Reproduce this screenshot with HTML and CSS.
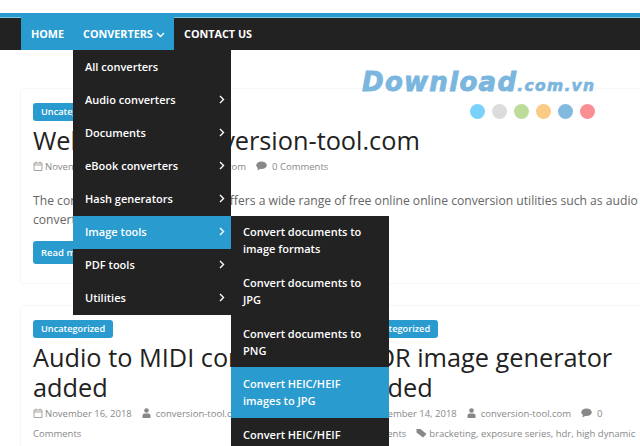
FILE: index.html
```html
<!DOCTYPE html>
<html lang="en">
<head>
<meta charset="utf-8">
<title>Conversion Tool</title>
<link rel="stylesheet" href="styles.css">
</head>
<body>
<header class="navbar">
  <ul class="nav">
    <li class="nav-item active"><a>HOME</a></li>
    <li class="nav-item active has-menu"><a>CONVERTERS <svg class="chev" width="9" height="6" viewBox="0 0 9 6"><path d="M1 1l3.500 3.500L8 1" fill="none" stroke="#fff" stroke-width="1.400"/></svg></a>
      <ul class="menu">
        <li><span>All converters</span></li>
        <li><span>Audio converters</span><svg class="arr" width="6" height="9" viewBox="0 0 6 9"><path d="M1 1l3.500 3.500L1 8" fill="none" stroke="#fff" stroke-width="1.400"/></svg></li>
        <li><span>Documents</span><svg class="arr" width="6" height="9" viewBox="0 0 6 9"><path d="M1 1l3.500 3.500L1 8" fill="none" stroke="#fff" stroke-width="1.400"/></svg></li>
        <li><span>eBook converters</span><svg class="arr" width="6" height="9" viewBox="0 0 6 9"><path d="M1 1l3.500 3.500L1 8" fill="none" stroke="#fff" stroke-width="1.400"/></svg></li>
        <li><span>Hash generators</span><svg class="arr" width="6" height="9" viewBox="0 0 6 9"><path d="M1 1l3.500 3.500L1 8" fill="none" stroke="#fff" stroke-width="1.400"/></svg></li>
        <li class="on"><span>Image tools</span><svg class="arr" width="6" height="9" viewBox="0 0 6 9"><path d="M1 1l3.500 3.500L1 8" fill="none" stroke="#fff" stroke-width="1.400"/></svg>
          <ul class="submenu">
            <li>Convert documents to image formats</li>
            <li>Convert documents to JPG</li>
            <li>Convert documents to PNG</li>
            <li class="on">Convert HEIC/HEIF images to JPG</li>
            <li>Convert HEIC/HEIF images to PNG</li>
          </ul>
        </li>
        <li><span>PDF tools</span><svg class="arr" width="6" height="9" viewBox="0 0 6 9"><path d="M1 1l3.500 3.500L1 8" fill="none" stroke="#fff" stroke-width="1.400"/></svg></li>
        <li><span>Utilities</span><svg class="arr" width="6" height="9" viewBox="0 0 6 9"><path d="M1 1l3.500 3.500L1 8" fill="none" stroke="#fff" stroke-width="1.400"/></svg></li>
      </ul>
    </li>
    <li class="nav-item"><a>CONTACT US</a></li>
  </ul>
</header>

<main class="content">
  <article class="card wide">
    <span class="badge">Uncategorized</span>
    <h2>Welcome to conversion-tool.com</h2>
    <p class="meta"><span><svg class="ic tight" width="10" height="10" viewBox="0 0 10 10"><path d="M1 2h8v7.500H1zM1 4h8M3 .5v2M7 .5v2" fill="none" stroke="#a9a39d"/></svg>November 16, 2018</span> <span><svg class="ic" width="9" height="10" viewBox="0 0 9 10"><circle cx="4.500" cy="2.500" r="2.300" fill="#888"/><path d="M.5 10V7.500Q.5 5.500 2.500 5.500h4Q8.500 5.500 8.500 7.500V10z" fill="#888"/></svg>conversion-tool.com</span> <span><svg class="ic" width="11" height="10" viewBox="0 0 11 10"><ellipse cx="5.500" cy="4.300" rx="5.200" ry="3.800" fill="#888"/><path d="M2 6.500L1.500 9.500 5 7.500z" fill="#888"/></svg>0 Comments</span></p>
    <p class="excerpt">The conversion-tool.com website offers a wide range of free online online conversion utilities such as audio converters and image tools.</p>
    <a class="btn">Read more</a>
  </article>
  <div class="row">
    <article class="card">
      <span class="badge">Uncategorized</span>
      <h2>Audio to MIDI converter added</h2>
      <p class="meta"><span><svg class="ic tight" width="10" height="10" viewBox="0 0 10 10"><path d="M1 2h8v7.500H1zM1 4h8M3 .5v2M7 .5v2" fill="none" stroke="#a9a39d"/></svg>November 16, 2018</span> <span><svg class="ic" width="9" height="10" viewBox="0 0 9 10"><circle cx="4.500" cy="2.500" r="2.300" fill="#888"/><path d="M.5 10V7.500Q.5 5.500 2.500 5.500h4Q8.500 5.500 8.500 7.500V10z" fill="#888"/></svg>conversion-tool.com</span> <span><svg class="ic" width="11" height="10" viewBox="0 0 11 10"><ellipse cx="5.500" cy="4.300" rx="5.200" ry="3.800" fill="#888"/><path d="M2 6.500L1.500 9.500 5 7.500z" fill="#888"/></svg>0 Comments</span></p>
    </article>
    <article class="card">
      <span class="badge">Uncategorized</span>
      <h2>HDR image generator added</h2>
      <p class="meta"><span><svg class="ic tight" width="10" height="10" viewBox="0 0 10 10"><path d="M1 2h8v7.500H1zM1 4h8M3 .5v2M7 .5v2" fill="none" stroke="#a9a39d"/></svg>November 14, 2018</span> <span><svg class="ic" width="9" height="10" viewBox="0 0 9 10"><circle cx="4.500" cy="2.500" r="2.300" fill="#888"/><path d="M.5 10V7.500Q.5 5.500 2.500 5.500h4Q8.500 5.500 8.500 7.500V10z" fill="#888"/></svg>conversion-tool.com</span> <span><svg class="ic" width="11" height="10" viewBox="0 0 11 10"><ellipse cx="5.500" cy="4.300" rx="5.200" ry="3.800" fill="#888"/><path d="M2 6.500L1.500 9.500 5 7.500z" fill="#888"/></svg>0 Comments</span> <span><svg class="ic tight" width="11" height="10" viewBox="0 0 11 10"><path d="M.5 1h4l6 5-3.500 3.500-6.500-5z" fill="#888"/></svg>bracketing, exposure series, hdr, high dynamic</span></p>
    </article>
  </div>
</main>

<div class="watermark">
  <div class="wordmark"><span class="big">Download</span><span class="small">.com.vn</span></div>
  <div class="dots"><i class="d1"></i><i class="d2"></i><i class="d3"></i><i class="d4"></i><i class="d5"></i><i class="d6"></i></div>
</div>
</body>
</html>
```
FILE: styles.css
```css
* { box-sizing: border-box; }
html, body { margin: 0; padding: 0; height: 446px; overflow: hidden; }
body { background: #fff; font-family: "Open Sans", sans-serif; width: 640px; position: relative; }

.navbar { margin-top: 13px; height: 37px; background: #222; border-top: 4px solid #2a9bcf; padding-left: 21px; box-shadow: inset 0 1px 0 #7cc3e4; }
.nav, .menu, .submenu { list-style: none; margin: 0; padding: 0; }
.nav { display: flex; height: 33px; }
.nav-item { position: relative; font-size: 10.800px; font-weight: 700; color: #fff; }
.nav-item a { display: block; padding: 0 10px; line-height: 33px; white-space: nowrap; }
.nav-item:first-child { width: 52px; }
.has-menu { width: 101px; }
.nav-item.active { background: #2a9bcf; }

.menu { position: absolute; z-index: 5; left: 0; top: 33px; width: 158px; background: #222; }
.menu > li { position: relative; height: 33.130px; display: flex; align-items: center; justify-content: space-between; padding: 0 6px 1px 12px; font-size: 11px; font-weight: 600; color: #fff; }
.menu > li.on { background: #2a9bcf; }
.submenu { position: absolute; left: 158px; top: 0; width: 158px; background: #222; }
.submenu li { padding: 7.800px 12px 8.800px; line-height: 17px; font-size: 11px; font-weight: 600; }
.submenu li.on { background: #2a9bcf; }

.content { padding: 39px 0 0 21px; width: 640px; }
.card { width: 638px; padding: 14px 12px 12px; background: #fff; box-shadow: 0 0 2px rgba(0,0,0,.1); }
.card.wide { height: 194px; }
.row { display: flex; gap: 12px; margin-top: 23px; width: 638px; }
.row .card { width: 313px; flex: none; }
.badge { display: inline-block; height: 18px; line-height: 18px; padding: 0 8px; background: #2a9bcf; color: #fff; font-size: 9.200px; font-weight: 600; border-radius: 3px; vertical-align: top; }
h2 { margin: 0; font-size: 25.300px; font-weight: 400; line-height: 30px; color: #222; }
.meta { margin: 2px 0 0; font-size: 9.500px; line-height: 20px; color: #888; }
.meta span { margin-right: 7.500px; }
.ic { margin-right: 5px; vertical-align: -1px; }
.ic.tight { margin-right: 2px; }
.excerpt { margin: 14px 0 0; font-size: 12.150px; line-height: 19px; color: #666; }
.btn { display: inline-block; margin-top: 11.500px; height: 23px; line-height: 23px; padding: 0 8px; background: #2a9bcf; color: #fff; font-size: 9.500px; font-weight: 600; border-radius: 3px; }

.watermark { position: absolute; z-index: 9; left: 362px; top: 71px; width: 233px; }
.wordmark { font-family: "DejaVu Sans", sans-serif; font-style: italic; font-weight: 700; color: #7ab6de; line-height: 22px; white-space: nowrap; }
.big { font-size: 26px; letter-spacing: 1.300px; -webkit-text-stroke: .9px #7ab6de; }
.small { font-size: 15.500px; letter-spacing: 1.300px; -webkit-text-stroke: .6px #7ab6de; }
.dots { display: flex; justify-content: flex-end; gap: 7px; margin-top: 7px; }
.dots i { width: 15px; height: 15px; border-radius: 50%; }
.d1 { background: #7ad2fb; }
.d2 { background: #dcdcdc; }
.d3 { background: #bcdd9a; }
.d4 { background: #fbcb85; }
.d5 { background: #82b9df; }
.d6 { background: #f98e93; }
```
